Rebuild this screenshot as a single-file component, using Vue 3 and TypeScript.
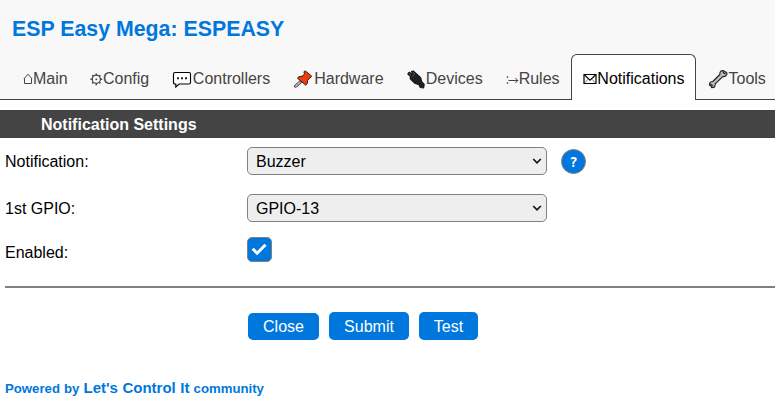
<script setup lang="ts">
import { ref } from 'vue'

interface Tab {
  name: string
  icon: string
  width: number
}

const tabs: Tab[] = [
  { name: 'Main', icon: 'home', width: 10 },
  { name: 'Config', icon: 'gear', width: 12.3 },
  { name: 'Controllers', icon: 'speech', width: 20.6 },
  { name: 'Hardware', icon: 'pin', width: 21 },
  { name: 'Devices', icon: 'plug', width: 19.2 },
  { name: 'Rules', icon: 'rules', width: 13 },
  { name: 'Notifications', icon: 'mail', width: 14.8 },
  { name: 'Tools', icon: 'wrench', width: 21 },
]

const active = ref('Notifications')
const notification = ref('Buzzer')
const gpio = ref('GPIO-13')
const enabled = ref(true)
</script>

<template>
  <div class="page">
    <header class="header">
      <h1>ESP Easy Mega: ESPEASY</h1>
      <nav class="menu">
        <a
          v-for="tab in tabs"
          :key="tab.name"
          class="tab"
          :class="{ active: tab.name === active }"
          @click="active = tab.name"
        >
          <span class="icon" :style="{ width: tab.width + 'px' }">
            <svg v-if="tab.icon === 'home'" width="10" height="20" viewBox="0 0 10 20" fill="none" stroke="#444">
              <path d="M.8 10 5 5.2 9.2 10M1.5 9.5V14.5H8.5V9.5" />
            </svg>
            <svg v-else-if="tab.icon === 'gear'" class="gear" width="13" height="20" viewBox="0 0 13 20" fill="none" stroke="#444">
              <circle cx="6.3" cy="10.3" r="4.1" stroke-width="1.2" />
              <path d="M6.3 4.4v1.8M6.3 14.4v1.8M.4 10.3h1.8M10.4 10.3h1.8M2.2 6.2l1.2 1.2M9.2 13.2l1.2 1.2M2.2 14.4l1.2-1.2M9.2 7.4l1.2-1.2" stroke-width="1.5" />
              <circle cx="6.3" cy="10.3" r=".9" fill="#444" stroke="none" />
            </svg>
            <svg v-else-if="tab.icon === 'speech'" width="20" height="20" viewBox="0 0 20 20">
              <path d="M3 3.5H17Q18.5 3.5 18.5 5V13.5Q18.5 15 17 15H7.2L3.8 18V15H3Q1.5 15 1.5 13.5V5Q1.5 3.5 3 3.5Z" fill="#fff" stroke="#000" stroke-width="1.15" />
              <path d="M5 8.2h2v2H5zM9 8.2h2v2H9zM13 8.2h2v2h-2z" fill="#222" />
            </svg>
            <svg v-else-if="tab.icon === 'pin'" width="20" height="20" viewBox="0 0 20 20" stroke-linejoin="round">
              <path d="M6.8 12 1.4 16.6 1.8 18.2 3.5 17.9 8.6 13.7Z" fill="#bbb" stroke="#444" stroke-width="1" />
              <path d="M11 3.3Q11.2 1.4 12.6 2.2L18.3 6.8Q18.7 8.4 17 8.7L14.6 11.4Q15 14.9 12.8 16.2L4.4 9.2Q5.4 7 9 7.3L11.6 5Z" fill="#f23c08" stroke="#222" stroke-width="1" />
            </svg>
            <svg v-else-if="tab.icon === 'plug'" width="18" height="20" viewBox="0 0 18 20">
              <path d="M1.2 4.2 2.4 3.3 4.6 5 5.6 4.4 4.6 2.6 6.2 2 9.3 4.8 13.6 8.6 14.8 12.8 17.2 15.4 16.6 18.8 13.3 18.5 12 15.6 7.6 14.1 3.4 9.9 3.2 7.1 1 5.2Z" fill="#202020" stroke="#151515" stroke-width="1.2" stroke-linejoin="round" />
              <path d="m5 7.8 2.6-2.6" stroke="#777" stroke-width=".7" />
              <path d="m2.3 4.6 1.8 1.4M5.9 3.2l1.8 1.8" stroke="#aaa" stroke-width=".5" />
            </svg>
            <svg v-else-if="tab.icon === 'rules'" width="13" height="20" viewBox="0 0 13 20" fill="none" stroke="#444">
              <path d="M.8 8h1.4M.8 14h1.4" stroke-width="1.4" />
              <path d="M2.5 11.5H12M9.3 9l2.5 2.5L9.3 14" stroke-width="1" />
            </svg>
            <svg v-else-if="tab.icon === 'mail'" width="14" height="20" viewBox="0 0 14 20" fill="none" stroke="#000">
              <path d="M1 5.5H13V14.5H1Z" stroke-width="1.2" />
              <path d="M1.5 6 7 11.2 12.5 6" stroke-width="1.1" />
              <path d="M1.5 14 4.8 10.4M12.5 14 9.2 10.4" stroke-width=".5" />
            </svg>
            <svg v-else width="20" height="20" viewBox="0 0 20 20" stroke-linejoin="round">
              <path d="M12 3.4Q12.7 1.5 15 1.6L16.4 2.2 18.5 3.4Q19.6 5.4 17.8 6.8Q16.5 7.9 14.8 7.6L7.2 14.9Q7.4 17.5 5.6 18.5L3.6 18.6 3.2 17.2 1.6 16.2Q1.2 13.4 3.4 12.8L4.8 12.5 11.8 5.5Z" fill="#bbb" stroke="#222" stroke-width="1.15" />
              <path d="M15.4 2.6Q15.2 4.7 17.5 4.5M2.2 15.4Q4.5 15.4 4.2 17.5" fill="none" stroke="#222" stroke-width="1.3" />
            </svg>
          </span>{{ tab.name }}
        </a>
      </nav>
    </header>

    <h2>Notification Settings</h2>

    <form class="settings" @submit.prevent>
      <div class="row">
        <label>Notification:</label>
        <div class="select" tabindex="0">
          <span>{{ notification }}</span>
          <svg width="10" height="8" viewBox="0 0 10 8"><path d="m1.2 2 3.8 3.8 3.8-3.8" fill="none" stroke="#111" stroke-width="1.6" /></svg>
        </div>
        <a class="help">?</a>
      </div>
      <div class="row gpio">
        <label>1st GPIO:</label>
        <div class="select" tabindex="0">
          <span>{{ gpio }}</span>
          <svg width="10" height="8" viewBox="0 0 10 8"><path d="m1.2 2 3.8 3.8 3.8-3.8" fill="none" stroke="#111" stroke-width="1.6" /></svg>
        </div>
      </div>
      <div class="row enabled">
        <label>Enabled:</label>
        <span class="check" role="checkbox" :aria-checked="enabled" @click="enabled = !enabled">
          <svg v-if="enabled" width="23" height="23" viewBox="0 0 23 23"><path d="m4.7 10.8 4.4 4.4 8.4-8.4" fill="none" stroke="#fff" stroke-width="3" /></svg>
        </span>
      </div>
      <hr />
      <div class="actions">
        <button class="close" type="button">Close</button>
        <button class="submit" type="submit">Submit</button>
        <button class="test" type="button">Test</button>
      </div>
    </form>

    <footer>Powered by <a>Let's Control It</a> community</footer>
  </div>
</template>

<style>
body {
  margin: 0;
  background: #fff;
  overflow: hidden;
}
</style>

<style scoped>
.page {
  width: 775px;
  height: 412px;
  overflow: hidden;
  font: 16px/18px "Liberation Sans", Arial, sans-serif;
  color: #000;
}
.header {
  box-sizing: border-box;
  height: 100px;
  padding-top: 17px;
  background: #f8f8f8;
  border-bottom: 1px solid #444;
}
h1 {
  margin: 0 0 12px 12px;
  font-size: 21.33px;
  line-height: 25px;
  color: #07d;
}
.menu {
  display: flex;
  padding-left: 11.5px;
  white-space: nowrap;
}
.tab {
  box-sizing: border-box;
  display: flex;
  flex-shrink: 0;
  height: 46px;
  padding: 15px 10.5px 0;
  border: 1px solid transparent;
  border-bottom: 0;
  border-radius: 6px 6px 0 0;
  color: #444;
  cursor: pointer;
}
.tab.active {
  border-color: #444;
  background: #fff;
  color: #000;
}
.icon {
  flex-shrink: 0;
  height: 20px;
  margin-top: -1px;
}
.icon svg {
  display: block;
}
.icon .gear {
  margin-left: -1px;
}
h2 {
  box-sizing: border-box;
  height: 28px;
  margin: 10px 0 0;
  padding: 1px 0 0 41px;
  background: #444;
  color: #fff;
  font-size: 16px;
  line-height: 28px;
}
.settings {
  padding: 9px 0 0 5px;
}
.row {
  display: flex;
  align-items: center;
  height: 28px;
}
.row label {
  width: 242px;
  padding-top: 2px;
}
.gpio {
  margin-top: 19px;
}
.enabled {
  align-items: flex-start;
  margin-top: 15px;
}
.enabled label {
  padding-top: 7px;
}
.select {
  box-sizing: border-box;
  display: flex;
  align-items: center;
  justify-content: space-between;
  width: 300px;
  height: 28px;
  padding: 0 4px 0 8px;
  border: 1px solid gray;
  border-radius: 5px;
  background: #eee;
}
.select span {
  padding-top: 2px;
}
.help {
  box-sizing: border-box;
  width: 25px;
  height: 25px;
  margin-left: 14px;
  border: 1px solid gray;
  border-radius: 50%;
  background: #07d;
  color: #fff;
  font: bold 14px/24px "DejaVu Sans Mono", monospace;
  text-align: center;
}
.check {
  box-sizing: border-box;
  width: 25px;
  height: 25px;
  border: 1px solid gray;
  border-radius: 5px;
  background: #07d;
}
.check svg {
  display: block;
}
hr {
  height: 2px;
  margin: 21px 0 0;
  border: 0;
  background: gray;
}
.actions {
  display: flex;
  align-items: flex-end;
  gap: 10px;
  margin: 24px 0 0 243px;
}
button {
  height: 28px;
  padding: 2px 0 0;
  border: 0;
  border-radius: 5px;
  background: #07d;
  color: #fff;
  font: inherit;
}
.close {
  width: 71px;
  height: 27px;
  padding-top: 0;
}
.submit {
  width: 80px;
}
.test {
  width: 59px;
}
footer {
  margin: 39px 0 0 5px;
  color: #07d;
  font-size: 13.2px;
  font-weight: bold;
  word-spacing: .4px;
}
footer a {
  font-size: 15px;
}
</style>
